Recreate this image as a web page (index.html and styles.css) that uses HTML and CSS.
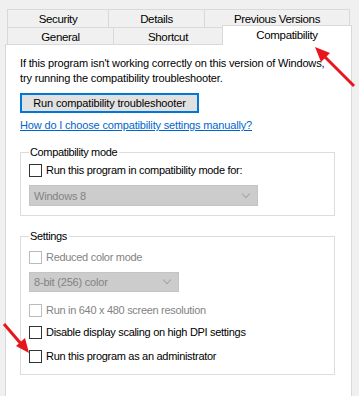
FILE: index.html
```html
<!DOCTYPE html>
<html>
<head>
<meta charset="utf-8">
<link rel="stylesheet" href="styles.css">
</head>
<body>
<div class="tabs">
  <div class="row row1">
    <div class="tab t-sec">Security</div>
    <div class="tab t-det">Details</div>
    <div class="tab t-prev">Previous Versions</div>
  </div>
  <div class="row row2">
    <div class="tab t-gen">General</div>
    <div class="tab t-short">Shortcut</div>
    <div class="tab active">Compatibility</div>
  </div>
</div>
<div class="panel">
  <p class="intro">If this program isn't working correctly on this version of Windows,<br>try running the compatibility troubleshooter.</p>
  <button class="btn">Run compatibility troubleshooter</button>
  <a class="link" href="#">How do I choose compatibility settings manually?</a>

  <fieldset class="group g-compat">
    <legend>Compatibility mode</legend>
    <div class="check c1"><span class="box"></span><span>Run this program in compatibility mode for:</span></div>
    <div class="select s-win"><span>Windows 8</span><span class="chev"></span></div>
  </fieldset>

  <fieldset class="group g-settings">
    <legend>Settings</legend>
    <div class="check dis c-red"><span class="box"></span><span>Reduced color mode</span></div>
    <div class="select s-col"><span>8-bit (256) color</span><span class="chev"></span></div>
    <div class="check dis c-640"><span class="box"></span><span>Run in 640 x 480 screen resolution</span></div>
    <div class="check c-dpi"><span class="box"></span><span>Disable display scaling on high DPI settings</span></div>
    <div class="check c-admin"><span class="box"></span><span>Run this program as an administrator</span></div>
  </fieldset>
</div>

<svg class="arrows" width="359" height="396" viewBox="0 0 359 396">
  <line x1="354" y1="86" x2="323" y2="55" stroke="#e8161c" stroke-width="3"/>
  <polygon points="315,47 330,53 321,62" fill="#e8161c"/>
  <line x1="4" y1="324" x2="22" y2="345" stroke="#e8161c" stroke-width="3"/>
  <polygon points="29,353 16,346 25,338" fill="#e8161c"/>
</svg>
</body>
</html>
```

FILE: styles.css
```css
* { box-sizing: border-box; }
html, body {
  margin: 0;
  padding: 0;
  background: #f0f0f0;
  width: 359px;
  height: 396px;
  overflow: hidden;
  font-family: "Liberation Sans", Arial, sans-serif;
  font-size: 11px;
  color: #000;
}

.tabs {
  padding-top: 9px;
  padding-left: 7px;
}
.row {
  display: flex;
}
.tab {
  border: 1px solid #d9d9d9;
  border-right: none;
  border-bottom: none;
  background: #f0f0f0;
  display: flex;
  align-items: center;
  justify-content: center;
  font-size: 11.5px;
  letter-spacing: -0.35px;
  line-height: 14px;
}
.row1 .tab { height: 18px; padding-top: 1px; }
.t-sec { width: 101px; }
.t-det { width: 96px; }
.t-prev { width: 146px; border-right: 1px solid #d9d9d9; }

.row2 { align-items: flex-end; height: 17px; }
.row2 .tab { height: 17px; padding-top: 1px; }
.t-gen { width: 106px; }
.t-short { width: 109px; }
.tab.active {
  width: 130px;
  height: 20px;
  margin-bottom: -1px;
  background: #fff;
  border-right: 1px solid #d9d9d9;
  position: relative;
  z-index: 1;
  align-items: flex-start;
  padding-top: 2px;
}

.panel {
  margin-left: 5px;
  width: 347px;
  height: 360px;
  background: #fff;
  border: 1px solid #d9d9d9;
  padding: 11px 0 0 14px;
}

.intro {
  margin: 0;
  line-height: 15px;
  letter-spacing: -0.16px;
}

.btn {
  display: block;
  margin-top: 7px;
  width: 179px;
  height: 20px;
  background: #e1e1e1;
  border: 2px solid #0078d7;
  font-family: inherit;
  font-size: 11px;
  letter-spacing: -0.15px;
  color: #000;
  padding: 0;
  line-height: 14px;
}

.link {
  display: block;
  margin-top: 5px;
  color: #0066cc;
  line-height: 15px;
  letter-spacing: -0.16px;
  text-decoration: underline;
  width: max-content;
}

.group {
  margin: 0;
  padding: 0 0 0 8px;
  width: 315px;
  border: 1px solid #dcdcdc;
  min-width: 0;
}
.group legend {
  padding: 0 2px 0 1px;
  margin-left: 0;
  line-height: 14px;
  letter-spacing: -0.35px;
}
.g-compat {
  margin-top: 12px;
  height: 71px;
}
.g-settings {
  margin-top: 13px;
  height: 146px;
}

.check {
  display: flex;
  align-items: center;
  gap: 4px;
  height: 13px;
  line-height: 13px;
  letter-spacing: -0.3px;
}
.box {
  width: 13px;
  height: 13px;
  border: 1px solid #333;
  background: #fff;
  flex: none;
}
.check.dis { color: #838383; }
.check.dis .box { border-color: #bcbcbc; }

.c1 { margin-top: 5px; }

.select {
  display: flex;
  align-items: center;
  justify-content: space-between;
  background: #cccccc;
  border: 1px solid #c4c4c4;
  color: #838383;
  letter-spacing: -0.2px;
  height: 21px;
  padding: 0 8px 0 4px;
}
.chev {
  width: 6px;
  height: 6px;
  border-right: 1px solid #a6a6a6;
  border-bottom: 1px solid #a6a6a6;
  transform: rotate(45deg);
  margin-top: -4px;
}
.s-win { width: 229px; margin-top: 8px; }
.s-col { width: 150px; margin-top: 8px; height: 20px; }

.c-red { margin-top: 8px; }
.c-640 { margin-top: 12px; }
.c-dpi { margin-top: 9px; }
.c-admin { margin-top: 11px; }

.arrows {
  position: absolute;
  left: 0;
  top: 0;
  pointer-events: none;
}
```
